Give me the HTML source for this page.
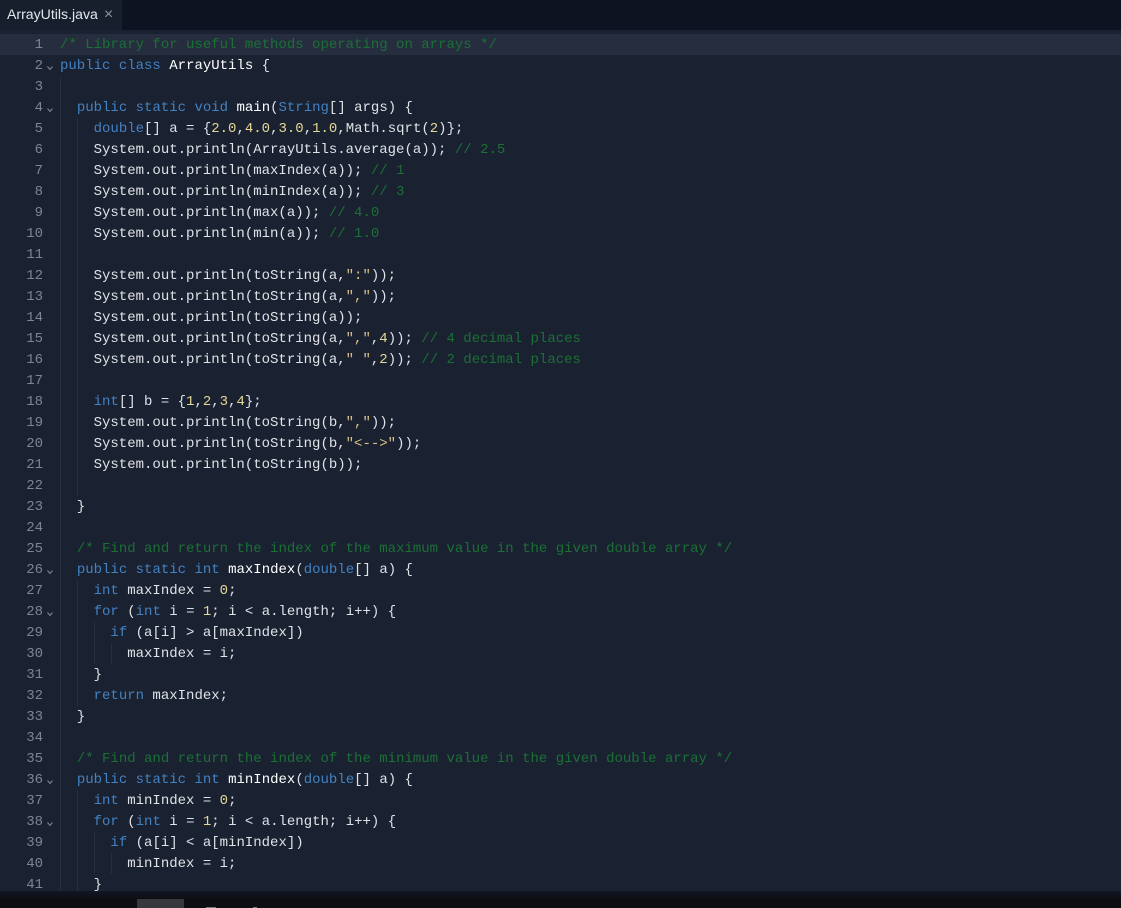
<!DOCTYPE html>
<html><head><meta charset="utf-8"><style>
html,body{margin:0;padding:0;background:#1a2131;}
#r{position:relative;width:1121px;height:908px;overflow:hidden;background:#1a2131;}
#top{position:absolute;left:0;top:0;width:1121px;height:30px;background:#0d1320;}
#tab{position:absolute;left:0;top:0;width:122px;height:30px;background:#171e2c;font:14.1px/29px "Liberation Sans",sans-serif;color:#e4e8ee;padding-left:7px;box-sizing:border-box;white-space:nowrap;}
#tab i{font-style:normal;color:#8a93a3;font-size:16px;margin-left:6px;}
#hl{position:absolute;left:0;top:34px;width:1121px;height:21px;background:#262d3f;}
.g{position:absolute;width:1px;background:#272e3d;}
#c{position:absolute;left:60px;top:35px;margin:0;font:14px/21px "Liberation Mono",monospace;color:#dfe2e6;white-space:pre;}
#n{position:absolute;left:0;top:35px;width:43px;text-align:right;margin:0;font:14px/21px "Liberation Mono",monospace;color:#7f858f;white-space:pre;}
.a{position:absolute;left:46px;width:8px;height:6px;}
b,u,em,s,q{font-weight:normal;font-style:normal;text-decoration:none;quotes:none;}
b{color:#4382c2;} u{color:#1b7035;} em{color:#e4d896;} s{color:#dcc088;}
q{color:#fff;}
#bot{position:absolute;left:0;top:891px;width:1121px;height:17px;background:linear-gradient(#111724,#0d0e12 8px);}
#box{position:absolute;left:137px;top:899px;width:47px;height:9px;background:#37383b;}
.d{position:absolute;background:#77797d;height:1px;top:907px;}
</style></head><body><div id="r">
<div id="hl"></div>
<div id="top"></div>
<div id="tab">ArrayUtils.java<i>×</i></div>
<div class="g" style="left:60px;top:76px;height:815px"></div>
<div class="g" style="left:77px;top:118px;height:378px"></div>
<div class="g" style="left:77px;top:580px;height:126px"></div>
<div class="g" style="left:77px;top:790px;height:101px"></div>
<div class="g" style="left:94px;top:622px;height:42px"></div>
<div class="g" style="left:94px;top:832px;height:42px"></div>
<div class="g" style="left:111px;top:643px;height:21px"></div>
<div class="g" style="left:111px;top:853px;height:21px"></div>
<pre id="n">1
2
3
4
5
6
7
8
9
10
11
12
13
14
15
16
17
18
19
20
21
22
23
24
25
26
27
28
29
30
31
32
33
34
35
36
37
38
39
40
41</pre>
<svg class="a" style="top:65px" viewBox="0 0 8 6"><path d="M1.5 1.5L4 4.5L6.5 1.5" fill="none" stroke="#7f8794"/></svg>
<svg class="a" style="top:107px" viewBox="0 0 8 6"><path d="M1.5 1.5L4 4.5L6.5 1.5" fill="none" stroke="#7f8794"/></svg>
<svg class="a" style="top:569px" viewBox="0 0 8 6"><path d="M1.5 1.5L4 4.5L6.5 1.5" fill="none" stroke="#7f8794"/></svg>
<svg class="a" style="top:611px" viewBox="0 0 8 6"><path d="M1.5 1.5L4 4.5L6.5 1.5" fill="none" stroke="#7f8794"/></svg>
<svg class="a" style="top:779px" viewBox="0 0 8 6"><path d="M1.5 1.5L4 4.5L6.5 1.5" fill="none" stroke="#7f8794"/></svg>
<svg class="a" style="top:821px" viewBox="0 0 8 6"><path d="M1.5 1.5L4 4.5L6.5 1.5" fill="none" stroke="#7f8794"/></svg>
<pre id="c"><u>/* Library for useful methods operating on arrays */</u>
<b>public</b> <b>class</b> <q>ArrayUtils</q> {

  <b>public</b> <b>static</b> <b>void</b> <q>main</q>(<b>String</b>[] args) {
    <b>double</b>[] a = {<em>2.0</em>,<em>4.0</em>,<em>3.0</em>,<em>1.0</em>,Math.sqrt(<em>2</em>)};
    System.out.println(ArrayUtils.average(a)); <u>// 2.5</u>
    System.out.println(maxIndex(a)); <u>// 1</u>
    System.out.println(minIndex(a)); <u>// 3</u>
    System.out.println(max(a)); <u>// 4.0</u>
    System.out.println(min(a)); <u>// 1.0</u>

    System.out.println(toString(a,<s>":"</s>));
    System.out.println(toString(a,<s>","</s>));
    System.out.println(toString(a));
    System.out.println(toString(a,<s>","</s>,<em>4</em>)); <u>// 4 decimal places</u>
    System.out.println(toString(a,<s>" "</s>,<em>2</em>)); <u>// 2 decimal places</u>

    <b>int</b>[] b = {<em>1</em>,<em>2</em>,<em>3</em>,<em>4</em>};
    System.out.println(toString(b,<s>","</s>));
    System.out.println(toString(b,<s>"&lt;--&gt;"</s>));
    System.out.println(toString(b));

  }

  <u>/* Find and return the index of the maximum value in the given double array */</u>
  <b>public</b> <b>static</b> <b>int</b> <q>maxIndex</q>(<b>double</b>[] a) {
    <b>int</b> maxIndex = <em>0</em>;
    <b>for</b> (<b>int</b> i = <em>1</em>; i &lt; a.length; i++) {
      <b>if</b> (a[i] &gt; a[maxIndex])
        maxIndex = i;
    }
    <b>return</b> maxIndex;
  }

  <u>/* Find and return the index of the minimum value in the given double array */</u>
  <b>public</b> <b>static</b> <b>int</b> <q>minIndex</q>(<b>double</b>[] a) {
    <b>int</b> minIndex = <em>0</em>;
    <b>for</b> (<b>int</b> i = <em>1</em>; i &lt; a.length; i++) {
      <b>if</b> (a[i] &lt; a[minIndex])
        minIndex = i;
    }</pre>
<div id="bot"></div>
<div id="box"></div>
<div class="d" style="left:206px;width:10px"></div>
<div class="d" style="left:253px;width:4px"></div>
</div></body></html>
